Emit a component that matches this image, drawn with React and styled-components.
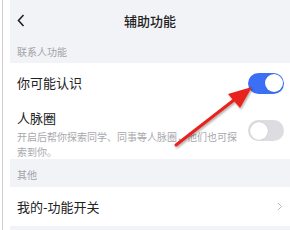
import React from "react";
import styled, { createGlobalStyle } from "styled-components";

const Global = createGlobalStyle`
  html, body { margin: 0; padding: 0; background: #fff; }
  body { font-family: "Noto Sans CJK SC", "Noto Sans", sans-serif; }
  * { box-sizing: border-box; }
`;

const Outer = styled.div`
  display: flex;
  width: 290px;
  height: 230px;
  padding-left: 2px;
  overflow: hidden;
  position: relative;
`;

const Frame = styled.div`
  flex: 1;
  display: flex;
  border-left: 1px solid #cfcfd2;
  padding-left: 7px;
`;

const Page = styled.div`
  flex: 1;
  background: #f2f3f7;
  display: flex;
  flex-direction: column;
`;

const Header = styled.div`
  height: 40px;
  display: grid;
  grid-template-columns: 30px 1fr 30px;
  align-items: center;
`;

const Back = styled.div`
  display: flex;
  align-items: center;
  padding-left: 7px;
  height: 100%;
`;

const Title = styled.div`
  text-align: center;
  font-size: 13px;
  font-weight: 500;
  color: #1f1f1f;
`;

const SectionLabel = styled.div`
  height: ${(p) => p.$h}px;
  display: flex;
  align-items: center;
  padding-left: 7px;
  padding-top: ${(p) => p.$pt || 0}px;
  font-size: 10px;
  color: #a3a3a8;
`;

const Row = styled.div`
  background: #fff;
  display: flex;
  align-items: ${(p) => p.$align || "center"};
  justify-content: space-between;
  padding: ${(p) => p.$pad || "0 6px 0 7px"};
  height: ${(p) => p.$h}px;
  gap: 10px;
`;

const RowBody = styled.div`
  display: flex;
  flex-direction: column;
  flex: 1;
  min-width: 0;
`;

const RowText = styled.div`
  font-size: 13px;
  color: #222;
  line-height: 18px;
`;

const Desc = styled.div`
  font-size: 10px;
  color: #a8a8ad;
  line-height: 15px;
  margin-top: 2px;
  white-space: nowrap;
`;

const Toggle = styled.div`
  width: 36px;
  height: 21px;
  border-radius: 11px;
  flex-shrink: 0;
  background: ${(p) => (p.$on ? "#3a6ff6" : "#dcdce1")};
  position: relative;
  margin-top: ${(p) => p.$mt || 0}px;
  &::after {
    content: "";
    position: absolute;
    top: 1.5px;
    left: ${(p) => (p.$on ? "16.5px" : "1.5px")};
    width: 18px;
    height: 18px;
    border-radius: 50%;
    background: #fff;
    box-shadow: 0 0 1px rgba(0, 0, 0, 0.25);
  }
`;

const Filler = styled.div`
  flex: 1;
`;

const Arrow = styled.svg`
  position: absolute;
  left: 0;
  top: 0;
  pointer-events: none;
`;

export default function App() {
  return (
    <>
      <Global />
      <Outer>
        <Frame>
          <Page>
            <Header>
              <Back>
                <svg width="8" height="13" viewBox="0 0 8 13">
                  <path d="M6.5 1 L1.5 6.5 L6.5 12" fill="none" stroke="#222" strokeWidth="1.6" />
                </svg>
              </Back>
              <Title>辅助功能</Title>
              <div />
            </Header>
            <SectionLabel $h={23}>联系人功能</SectionLabel>
            <Row $h={40}>
              <RowText>你可能认识</RowText>
              <Toggle $on />
            </Row>
            <Row $h={56} $pad="6px 6px 0 7px" $align="flex-start">
              <RowBody>
                <RowText>人脉圈</RowText>
                <Desc>
                  开启后帮你探索同学、同事等人脉圈，他们也可探
                  <br />
                  索到你。
                </Desc>
              </RowBody>
              <Toggle $mt={11} />
            </Row>
            <SectionLabel $h={28} $pt={3}>其他</SectionLabel>
            <Row $h={39}>
              <RowText>我的-功能开关</RowText>
              <svg width="6" height="9" viewBox="0 0 6 9" style={{ marginRight: 1 }}>
                <path d="M1 1 L4.5 4.5 L1 8" fill="none" stroke="#b8b8bd" strokeWidth="1" />
              </svg>
            </Row>
            <Filler />
          </Page>
        </Frame>
        <Arrow width="290" height="230" viewBox="0 0 290 230">
          <defs>
            <filter id="sh" x="-20%" y="-20%" width="140%" height="140%">
              <feDropShadow dx="1" dy="1.5" stdDeviation="1" floodColor="#000" floodOpacity="0.35" />
            </filter>
          </defs>
          <g filter="url(#sh)">
            <line x1="176" y1="145" x2="234" y2="100" stroke="#e8201c" strokeWidth="3" strokeLinecap="round" />
            <polygon points="252,87 228,94 240,108" fill="#e8201c" />
          </g>
        </Arrow>
      </Outer>
    </>
  );
}
